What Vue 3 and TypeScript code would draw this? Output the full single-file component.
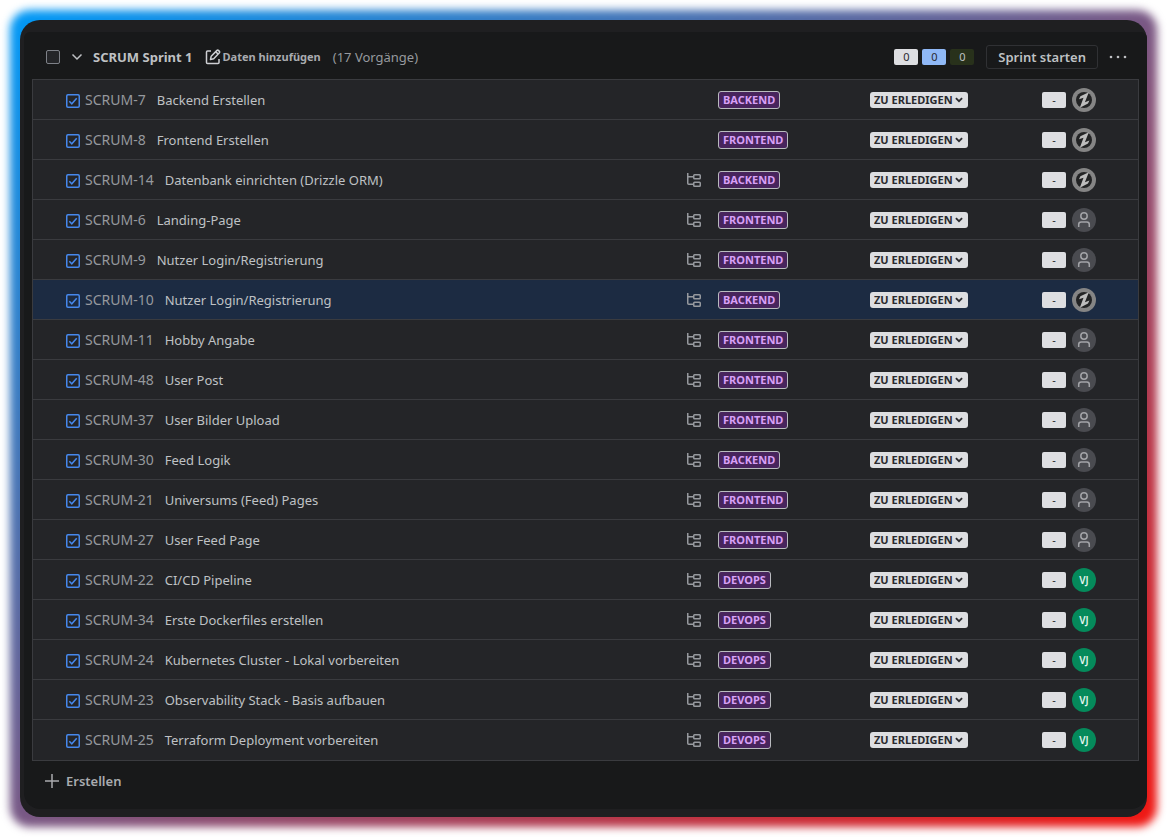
<script setup lang="ts">
import { ref } from 'vue'

type Avatar = 'logo' | 'none' | 'vj'

interface Issue {
  id: number
  title: string
  epic: 'BACKEND' | 'FRONTEND' | 'DEVOPS'
  avatar: Avatar
  subtasks: boolean
}

const issue = (id: number, title: string, epic: Issue['epic'], avatar: Avatar, subtasks = true): Issue => ({
  id,
  title,
  epic,
  avatar,
  subtasks,
})

const issues = ref<Issue[]>([
  issue(7, 'Backend Erstellen', 'BACKEND', 'logo', false),
  issue(8, 'Frontend Erstellen', 'FRONTEND', 'logo', false),
  issue(14, 'Datenbank einrichten (Drizzle ORM)', 'BACKEND', 'logo'),
  issue(6, 'Landing-Page', 'FRONTEND', 'none'),
  issue(9, 'Nutzer Login/Registrierung', 'FRONTEND', 'none'),
  issue(10, 'Nutzer Login/Registrierung', 'BACKEND', 'logo'),
  issue(11, 'Hobby Angabe', 'FRONTEND', 'none'),
  issue(48, 'User Post', 'FRONTEND', 'none'),
  issue(37, 'User Bilder Upload', 'FRONTEND', 'none'),
  issue(30, 'Feed Logik', 'BACKEND', 'none'),
  issue(21, 'Universums (Feed) Pages', 'FRONTEND', 'none'),
  issue(27, 'User Feed Page', 'FRONTEND', 'none'),
  issue(22, 'CI/CD Pipeline', 'DEVOPS', 'vj'),
  issue(34, 'Erste Dockerfiles erstellen', 'DEVOPS', 'vj'),
  issue(24, 'Kubernetes Cluster - Lokal vorbereiten', 'DEVOPS', 'vj'),
  issue(23, 'Observability Stack - Basis aufbauen', 'DEVOPS', 'vj'),
  issue(25, 'Terraform Deployment vorbereiten', 'DEVOPS', 'vj'),
])

const selectedId = ref(10)
</script>

<template>
  <main class="stage">
    <div class="frame">
      <section class="panel" aria-labelledby="sprint-name">
        <header class="head">
          <input class="check-all" type="checkbox" aria-labelledby="sprint-name" />
          <button class="icon-btn toggle" type="button" aria-labelledby="sprint-name">
            <svg width="12" height="8" viewBox="0 0 12 8" fill="none" stroke="currentColor" stroke-width="1.5">
              <path d="M1.5 1.5 6 6l4.500-4.500" />
            </svg>
          </button>
          <h2 id="sprint-name" class="name">SCRUM Sprint 1</h2>
          <button class="dates" type="button">
            <svg width="16" height="16" viewBox="0 0 16 16" fill="none" stroke="currentColor" stroke-width="1.500" stroke-linejoin="round">
              <path d="M6 2H2.500Q1.500 2 1.500 3v10.500q0 1 1 1H13q1 0 1-1V10" />
              <path d="M5.500 10.500 6.200 7.200 12 1.400q.7-.6 1.400 0l1 1q.6.7 0 1.400L8.700 9.700z" />
              <path d="m10.800 2.800 2.300 2.300" />
            </svg>
            Daten hinzufügen
          </button>
          <span class="count">({{ issues.length }} Vorgänge)</span>
          <div class="sums">
            <span class="sum todo">0</span>
            <span class="sum doing">0</span>
            <span class="sum done">0</span>
          </div>
          <button class="start" type="button">Sprint starten</button>
          <button class="icon-btn more" type="button" aria-label="Mehr">
            <svg width="18" height="4" viewBox="0 0 18 4" fill="currentColor">
              <circle cx="2" cy="2" r="1.300" />
              <circle cx="9" cy="2" r="1.300" />
              <circle cx="16" cy="2" r="1.300" />
            </svg>
          </button>
        </header>

        <table class="issues">
          <colgroup>
            <col />
            <col class="col-tree" />
            <col class="col-epic" />
            <col class="col-status" />
            <col class="col-owner" />
          </colgroup>
          <tbody>
            <tr v-for="item in issues" :key="item.id" :class="{ selected: item.id === selectedId }">
              <td>
                <div class="summary">
                  <svg class="type" width="14" height="16" viewBox="0 0 14 16" fill="none" stroke="currentColor" stroke-width="1.500">
                    <rect x=".75" y="2.750" width="12.500" height="12.500" rx="1.200" />
                    <path d="m3.300 9.300 2.500 2.500 4.900-5.600" />
                  </svg>
                  <a class="key" href="#">SCRUM-{{ item.id }}</a>
                  <span :id="`issue-${item.id}`" class="title">{{ item.title }}</span>
                </div>
              </td>
              <td>
                <svg v-if="item.subtasks" class="tree" width="16" height="16" viewBox="0 0 16 16" fill="none" stroke="currentColor" stroke-width="1.500">
                  <path d="M1.750 1v10.250q0 1 1 1H8M1.750 4.750H8" />
                  <rect x="7.750" y="2.750" width="6.500" height="4" rx=".8" />
                  <rect x="7.750" y="10.250" width="6.500" height="4" rx=".8" />
                </svg>
              </td>
              <td><div class="epic">{{ item.epic }}</div></td>
              <td>
                <div class="status">
                  <select :aria-labelledby="`issue-${item.id}`">
                    <option>ZU ERLEDIGEN</option>
                  </select>
                  <svg width="8" height="6" viewBox="0 0 8 6" fill="none" stroke="currentColor" stroke-width="1.800">
                    <path d="m.9 1.200 3.100 3 3.100-3" />
                  </svg>
                </div>
              </td>
              <td>
                <div class="owner">
                  <span class="points">-</span>
                  <svg v-if="item.avatar === 'logo'" width="24" height="24" viewBox="0 0 24 24">
                    <circle cx="12" cy="12" r="12" fill="#858585" />
                    <circle cx="12" cy="12" r="8" fill="#222324" />
                    <path d="M7 11.200 8.400 8.200 16.800 4.200 12.900 14.300 17.400 12.600 16 15.600 7.800 19.800 11.500 9.700z" fill="#bdbdbd" />
                  </svg>
                  <svg v-else-if="item.avatar === 'none'" width="24" height="24" viewBox="0 0 24 24" fill="none" stroke="#a3a4a8" stroke-width="1.500">
                    <circle cx="12" cy="12" r="12" fill="#4a4b50" stroke="none" />
                    <circle cx="12" cy="8" r="3.200" />
                    <path d="M6.700 19v-2.500q0-2.500 2.500-2.500h5.600q2.500 0 2.500 2.500V19" />
                  </svg>
                  <span v-else class="initials">VJ</span>
                </div>
              </td>
            </tr>
          </tbody>
        </table>

        <button class="create" type="button">
          <svg width="14" height="14" viewBox="0 0 14 14" stroke="currentColor" stroke-width="1.500">
            <path d="M7 0v14M0 7h14" />
          </svg>
          Erstellen
        </button>
      </section>
    </div>
  </main>
</template>

<style>
body {
  margin: 0;
  background: #fff;
}
</style>

<style scoped>
.stage {
  box-sizing: border-box;
  min-height: 100vh;
  padding: 20px;
  overflow: hidden;
  display: grid;
  font-family: "Segoe UI", "Noto Sans", "Open Sans", sans-serif;
  font-size: 13px;
  line-height: 20px;
  color: #bfc1c4;
}
.frame {
  position: relative;
  box-sizing: border-box;
  padding: 12px 0 8px 4px;
  border-radius: 20px;
  background: #1f1f21;
}
.frame::before {
  content: "";
  position: absolute;
  z-index: -1;
  inset: -10px;
  border-radius: 20px;
  background: linear-gradient(to bottom right, #0099f7, #f11712);
  filter: blur(4px);
}
.panel {
  box-sizing: border-box;
  height: 100%;
  padding: 0 8px;
  border-radius: 6px 6px 16px 16px;
  background: #18191a;
}
button {
  padding: 0;
  border: 0;
  background: none;
  color: inherit;
  font: inherit;
}
.head {
  display: flex;
  align-items: center;
  height: 47px;
  padding: 2px 12px 0 14px;
  box-sizing: border-box;
}
.check-all {
  appearance: none;
  box-sizing: border-box;
  width: 14px;
  height: 14px;
  margin: 0;
  border: 1px solid #7e8188;
  border-radius: 2px;
  background: #242528;
}
.icon-btn {
  display: flex;
}
.toggle {
  margin: 0 10px 0 11px;
}
.name {
  margin: 0;
  font-size: 13px;
  font-weight: 700;
}
.dates {
  display: flex;
  align-items: center;
  gap: 2px;
  margin: 0 12px;
  font-size: 11px;
  font-weight: 700;
  color: #a9abaf;
}
.dates svg {
  color: #ced0d4;
}
.count {
  color: #96999e;
}
.sums {
  display: flex;
  gap: 4px;
  margin: 0 12px 0 auto;
}
.sum,
.points {
  width: 24px;
  height: 16px;
  border-radius: 2px;
  font-size: 11px;
  line-height: 16px;
  text-align: center;
}
.todo,
.points {
  background: #dddee1;
  color: #292a2e;
}
.doing {
  background: #8fb8f6;
  color: #292a2e;
}
.done {
  background: #28311b;
  color: #bfc1c4;
}
.start {
  box-sizing: border-box;
  height: 24px;
  padding: 0 11px;
  margin-right: 11px;
  border: 1px solid #303134;
  border-radius: 3px;
  font-weight: 600;
}
.issues {
  width: 100%;
  table-layout: fixed;
  border-collapse: separate;
  border-spacing: 0;
  border: 1px solid #3a3b3f;
  background: #242528;
}
.col-tree { width: 32px; }
.col-epic { width: 152px; }
.col-status { width: 172px; }
.col-owner { width: 96px; }
td {
  box-sizing: border-box;
  height: 40px;
  padding: 0;
  border-bottom: 1px solid #3a3b3f;
}
tr:last-child td {
  border-bottom: 0;
}
.selected td {
  background: #1c2b42;
}
.summary {
  display: flex;
  align-items: center;
  padding-left: 33px;
}
.type {
  margin-right: 5px;
  color: #4688ec;
}
.key {
  margin-right: 11px;
  color: #96999e;
  font-size: 14px;
  text-decoration: none;
}
.tree {
  display: block;
  color: #96999e;
}
.epic {
  box-sizing: border-box;
  width: fit-content;
  height: 18px;
  padding: 0 4px;
  border: 1px solid #b9bbbf;
  border-radius: 3px;
  background: #48245d;
  color: #d8a0f7;
  font-size: 11px;
  font-weight: 700;
  line-height: 16px;
}
.status {
  position: relative;
  width: 98px;
  height: 16px;
  color: #292a2e;
}
.status select {
  appearance: none;
  display: block;
  width: 100%;
  height: 16px;
  padding: 0 4px;
  border: 0;
  border-radius: 3px;
  background: #dddee1;
  color: inherit;
  font-family: inherit;
  font-size: 11px;
  font-weight: 700;
  line-height: 16px;
}
.status svg {
  position: absolute;
  top: 5px;
  right: 5px;
  pointer-events: none;
}
.owner {
  display: flex;
  align-items: center;
  gap: 6px;
}
.initials {
  width: 24px;
  height: 24px;
  border-radius: 50%;
  background: #058a5b;
  color: #e4f5ee;
  font-size: 10px;
  font-weight: 600;
  line-height: 24px;
  text-align: center;
}
.create {
  display: flex;
  align-items: center;
  gap: 7px;
  margin: 10px 0 0 13px;
  font-weight: 600;
  color: #a9abaf;
}
</style>
